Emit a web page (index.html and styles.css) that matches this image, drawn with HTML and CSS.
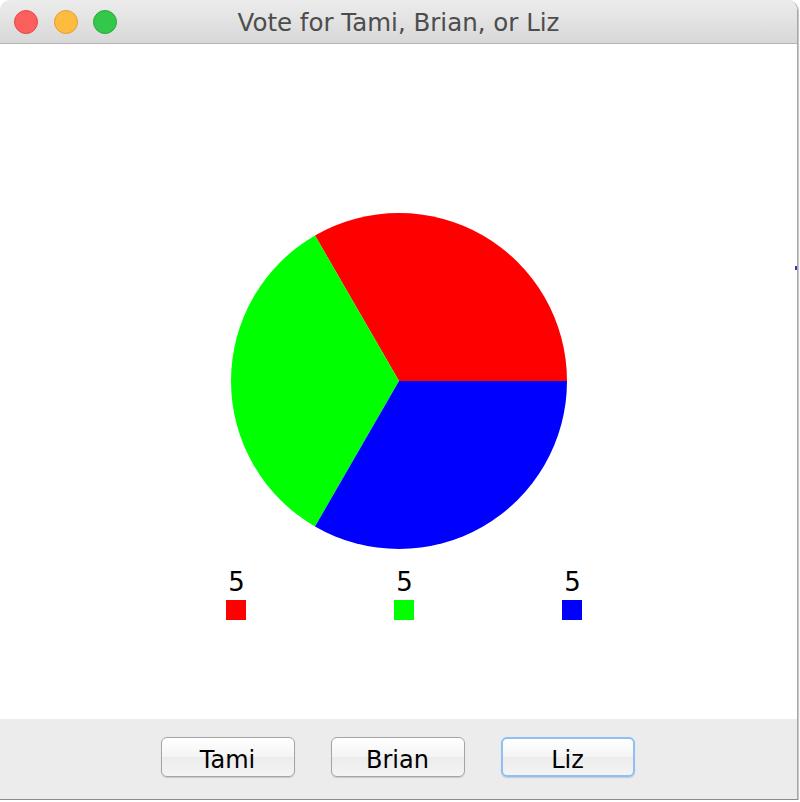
FILE: index.html
```html
<!DOCTYPE html>
<html>
<head>
<meta charset="utf-8">
<link rel="stylesheet" href="styles.css">
</head>
<body>
<div class="window">
  <div class="titlebar">
    <div class="lights">
      <span class="light red"></span>
      <span class="light yellow"></span>
      <span class="light green"></span>
    </div>
    <div class="title">Vote for Tami, Brian, or Liz</div>
  </div>
  <div class="canvas">
    <svg class="pie" width="336" height="336" viewBox="0 0 336 336">
      <path d="M168 168 L336 168 A168 168 0 0 0 84 22.51 Z" fill="#ff0000"/>
      <path d="M168 168 L84 22.51 A168 168 0 0 0 84 313.49 Z" fill="#00ff00"/>
      <path d="M168 168 L84 313.49 A168 168 0 0 0 336 168 Z" fill="#0000ff"/>
    </svg>
    <div class="legend">
      <div class="item"><span class="count">5</span><span class="swatch sw-red"></span></div>
      <div class="item"><span class="count">5</span><span class="swatch sw-green"></span></div>
      <div class="item"><span class="count">5</span><span class="swatch sw-blue"></span></div>
    </div>
  </div>
  <div class="buttons">
    <button class="btn">Tami</button>
    <button class="btn">Brian</button>
    <button class="btn focus">Liz</button>
  </div>
  <span class="tick"></span>
</div>
</body>
</html>
```

FILE: styles.css
```css
html, body {
  margin: 0;
  padding: 0;
  background: #ffffff;
}
.window {
  position: relative;
  width: 797px;
  height: 799px;
  border-right: 1px solid #a8a8a8;
  border-bottom: 1px solid #8a8a8a;
  border-top-right-radius: 10px;
  border-top-left-radius: 10px;
  display: flex;
  flex-direction: column;
  overflow: hidden;
  box-shadow: 1px 1px 1px rgba(0,0,0,0.25);
  font-family: "DejaVu Sans", "Lucida Grande", sans-serif;
}
.titlebar {
  height: 43px;
  flex: none;
  background: linear-gradient(#ececec, #d8d8d8);
  border-bottom: 1px solid #b3b3b3;
  display: flex;
  align-items: center;
  position: relative;
}
.lights {
  display: flex;
  gap: 15.5px;
  padding-left: 14px;
  padding-top: 1px;
}
.light {
  width: 24px;
  height: 24px;
  border-radius: 50%;
  box-sizing: border-box;
}
.red { background: #fc605c; border: 1px solid #de4a46; }
.yellow { background: #fdbc40; border: 1px solid #de9f34; }
.green { background: #34c84a; border: 1px solid #27aa35; }
.title {
  position: absolute;
  left: 0;
  right: 0;
  top: 0;
  bottom: 0;
  display: flex;
  align-items: center;
  justify-content: center;
  font-size: 24.5px;
  color: #4d4d4d;
  padding-top: 1px;
  pointer-events: none;
}
.canvas {
  flex: 1;
  background: #ffffff;
  display: flex;
  flex-direction: column;
  align-items: center;
}
.pie {
  display: block;
  margin-top: 169px;
}
.legend {
  display: flex;
  gap: 148px;
  margin-top: 16px;
  padding-left: 11px;
}
.item {
  width: 20px;
  display: flex;
  flex-direction: column;
  align-items: center;
}
.count {
  font-size: 26px;
  line-height: 34px;
  color: #000;
  white-space: nowrap;
  margin-left: 1px;
}
.swatch {
  width: 20px;
  height: 20px;
  margin-top: 1px;
}
.sw-red { background: #ff0000; }
.sw-green { background: #00ff00; }
.sw-blue { background: #0000ff; }
.buttons {
  height: 80px;
  flex: none;
  background: #ececec;
  display: flex;
  justify-content: center;
  align-items: flex-start;
  gap: 36px;
  padding-top: 18px;
  padding-right: 2px;
  box-sizing: border-box;
}
.btn {
  width: 134px;
  height: 40px;
  border: 1px solid #a5a5a5;
  border-radius: 6px;
  background: linear-gradient(#ffffff, #f4f4f4 50%, #ececec 51%, #f4f4f4);
  font-family: "DejaVu Sans", "Lucida Grande", sans-serif;
  font-size: 24px;
  color: #000;
  padding: 5px 0 0 0;
  box-shadow: 0 1px 1px rgba(0,0,0,0.15);
}
.btn.focus {
  border: 2px solid #8cc1f5;
}
.tick {
  position: absolute;
  right: 0;
  top: 266px;
  width: 2px;
  height: 4px;
  background: #3333cc;
}
```
